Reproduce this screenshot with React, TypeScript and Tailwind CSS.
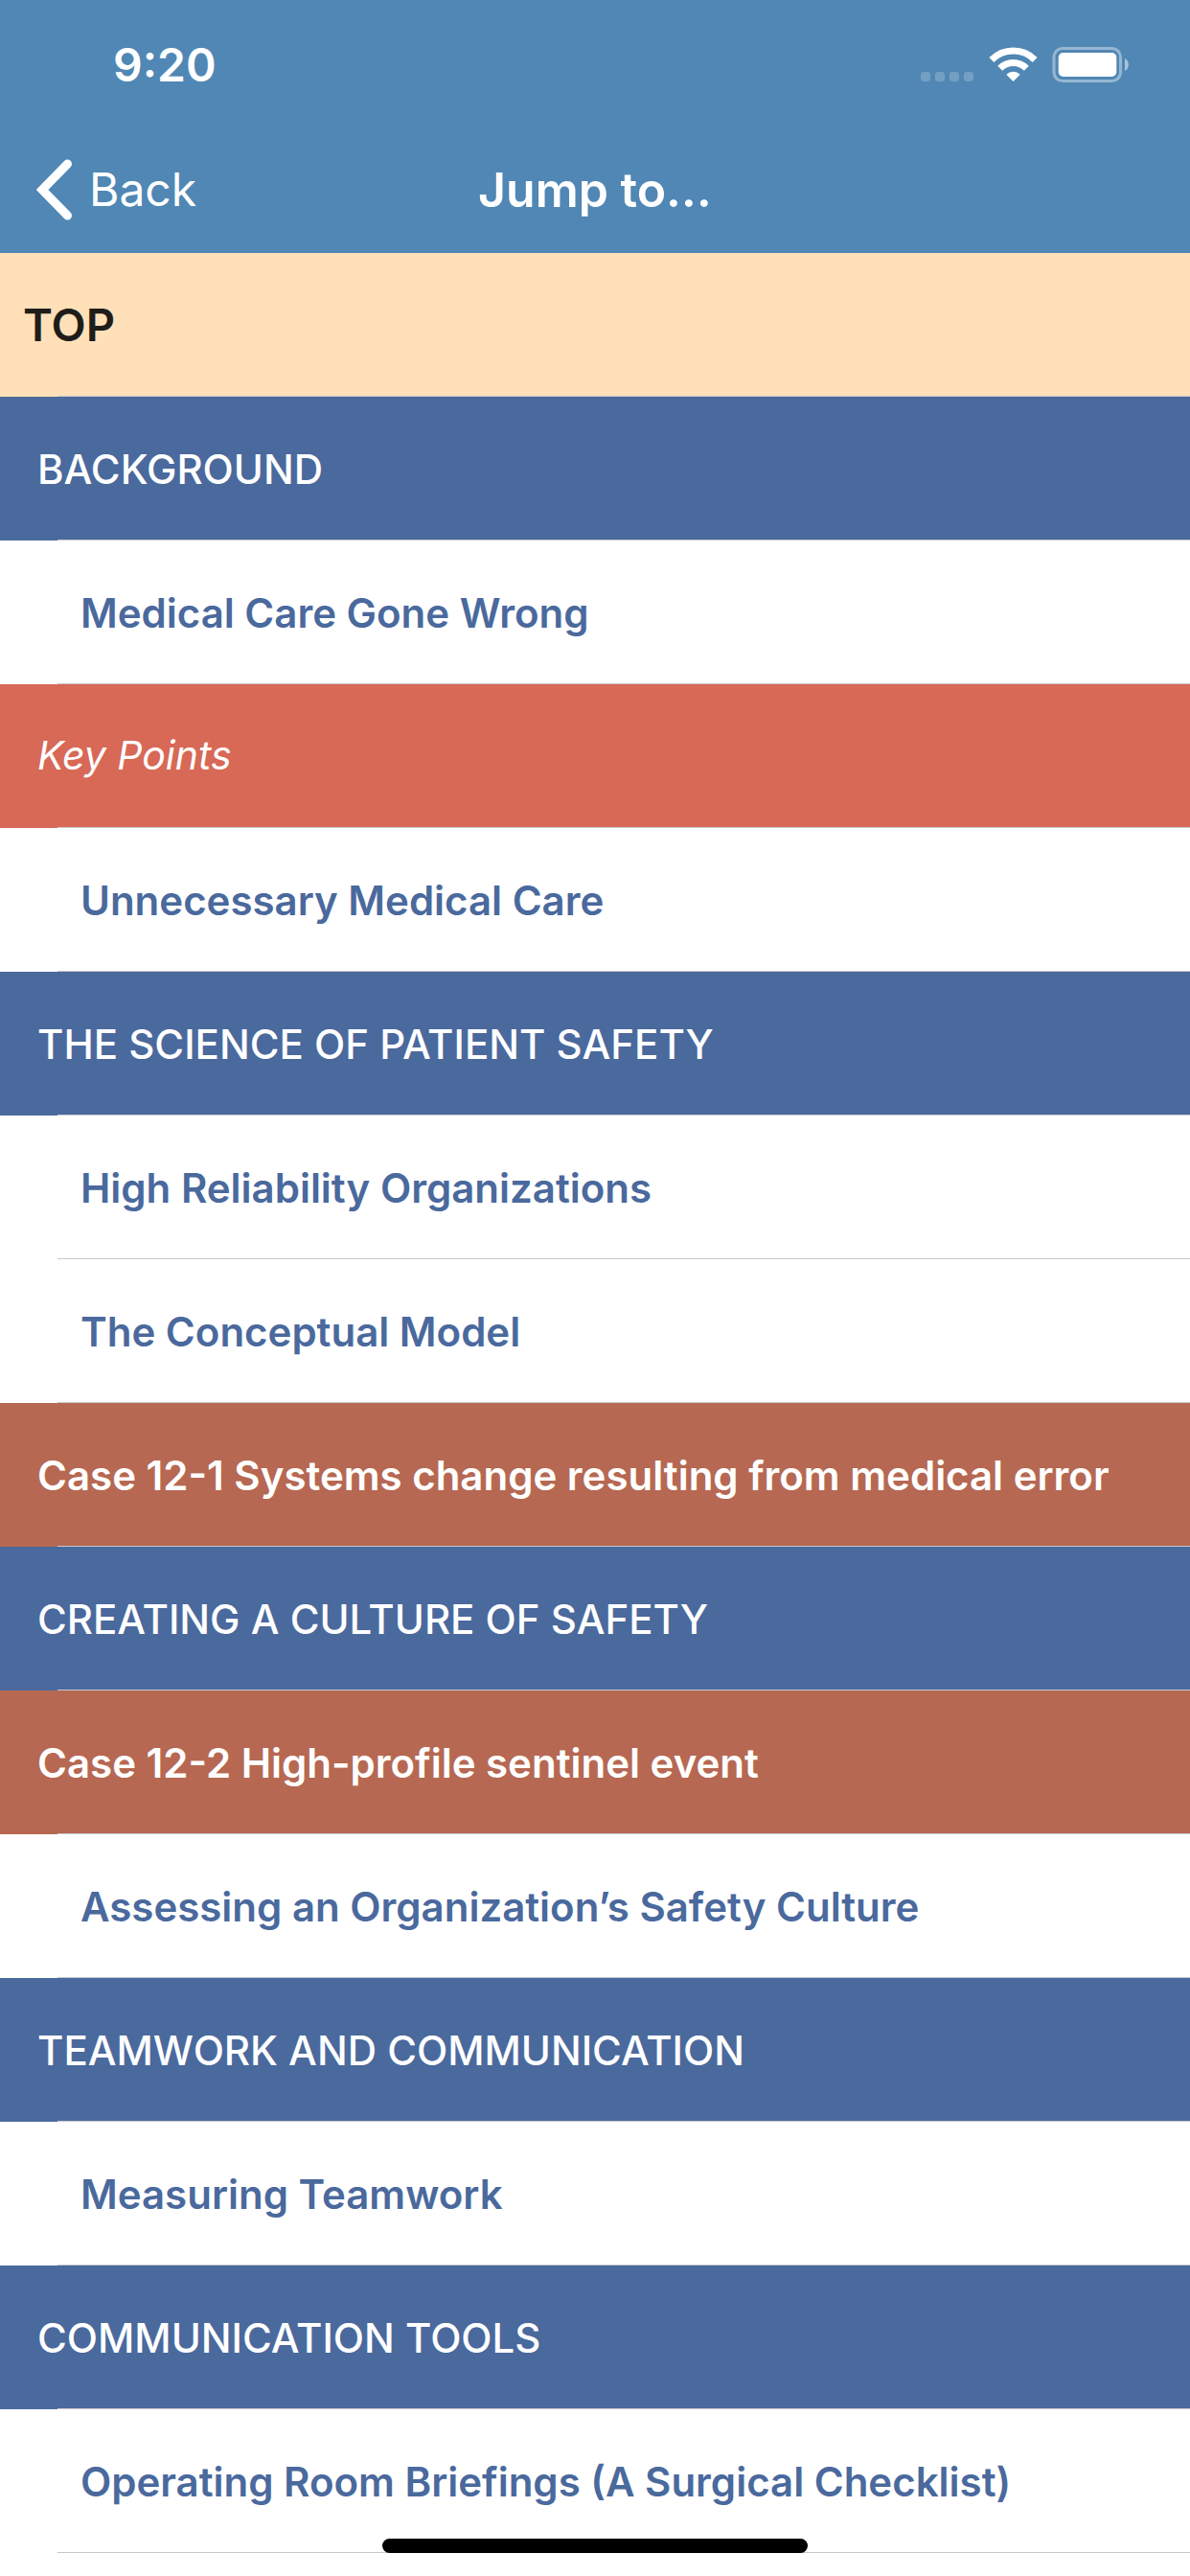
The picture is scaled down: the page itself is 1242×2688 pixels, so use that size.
import clsx from "clsx";

type Kind = "top" | "section" | "topic" | "keyPoints" | "case";

const items: { label: string; kind: Kind }[] = [
  { label: "TOP", kind: "top" },
  { label: "BACKGROUND", kind: "section" },
  { label: "Medical Care Gone Wrong", kind: "topic" },
  { label: "Key Points", kind: "keyPoints" },
  { label: "Unnecessary Medical Care", kind: "topic" },
  { label: "THE SCIENCE OF PATIENT SAFETY", kind: "section" },
  { label: "High Reliability Organizations", kind: "topic" },
  { label: "The Conceptual Model", kind: "topic" },
  { label: "Case 12-1 Systems change resulting from medical error", kind: "case" },
  { label: "CREATING A CULTURE OF SAFETY", kind: "section" },
  { label: "Case 12-2 High-profile sentinel event", kind: "case" },
  { label: "Assessing an Organization’s Safety Culture", kind: "topic" },
  { label: "TEAMWORK AND COMMUNICATION", kind: "section" },
  { label: "Measuring Teamwork", kind: "topic" },
  { label: "COMMUNICATION TOOLS", kind: "section" },
  { label: "Operating Room Briefings (A Surgical Checklist)", kind: "topic" },
];

const rowStyles: Record<Kind, string> = {
  top: "bg-[#ffe0b8] pl-6 text-[47px] font-semibold text-[#1f1d1a]",
  section: "bg-[#4a699d] pl-[39px] text-[42px] font-medium text-white",
  topic: "bg-white pl-[84px] text-[42px] font-semibold text-[#4a699d]",
  keyPoints: "bg-[#d76956] pl-[39px] text-[41px] italic text-white",
  case: "bg-[#b66852] pl-[39px] text-[42px] font-semibold text-white",
};

function StatusBar() {
  return (
    <div className="flex h-[132px] items-center justify-between pt-1 pr-16 pl-[118px]">
      <span className="text-[48px] font-semibold">9:20</span>
      <svg width="218" height="40" viewBox="0 0 218 40" fill="none" aria-hidden="true">
        <g fill="#fff" fillOpacity="0.2">
          <rect x="1" y="27" width="10" height="10" rx="3" />
          <rect x="16" y="27" width="10" height="10" rx="3" />
          <rect x="31" y="27" width="10" height="10" rx="3" />
          <rect x="46" y="27" width="10" height="10" rx="3" />
        </g>
        <path
          d="M74.9 14.4a32 32 0 0 1 45.2 0M83.7 23.2a19.5 19.5 0 0 1 27.6 0"
          stroke="#fff"
          strokeWidth="7"
        />
        <path d="M97.5 37l-7.2-7.2a10.2 10.2 0 0 1 14.4 0z" fill="#fff" />
        <rect x="140" y="2.5" width="69.5" height="34" rx="9" stroke="#fff" strokeOpacity="0.4" strokeWidth="3" />
        <rect x="144.7" y="7" width="60.6" height="25" rx="5" fill="#fff" />
        <path d="M214 13c5 2 5 11 0 13z" fill="#fff" fillOpacity="0.5" />
      </svg>
    </div>
  );
}

export default function App() {
  return (
    <div className="relative w-full bg-white font-['Inter',sans-serif]">
      <header className="bg-[#5087b4] text-white">
        <StatusBar />
        <nav className="grid h-[132px] grid-cols-3 items-center">
          <button type="button" className="flex items-center gap-[18px] pl-[38px] text-[48px]">
            <svg width="37" height="64" viewBox="0 0 37 64" fill="none" aria-hidden="true">
              <path d="M32.5 5L6 32l26.5 27" stroke="#fff" strokeWidth="9" strokeLinecap="round" />
            </svg>
            Back
          </button>
          <h1 className="text-center text-[50px] font-semibold">Jump to…</h1>
        </nav>
      </header>
      <ul>
        {items.map(({ label, kind }) => (
          <li key={label} className={clsx("relative h-[150px]", rowStyles[kind])}>
            <button type="button" className="h-full w-full text-left">
              {label}
            </button>
            <span className="absolute right-0 bottom-0 left-[60px] h-px bg-[#c8c8cc]" />
          </li>
        ))}
      </ul>
      <div className="fixed bottom-6 left-1/2 h-[15px] w-[444px] -translate-x-1/2 rounded-full bg-black" />
    </div>
  );
}
